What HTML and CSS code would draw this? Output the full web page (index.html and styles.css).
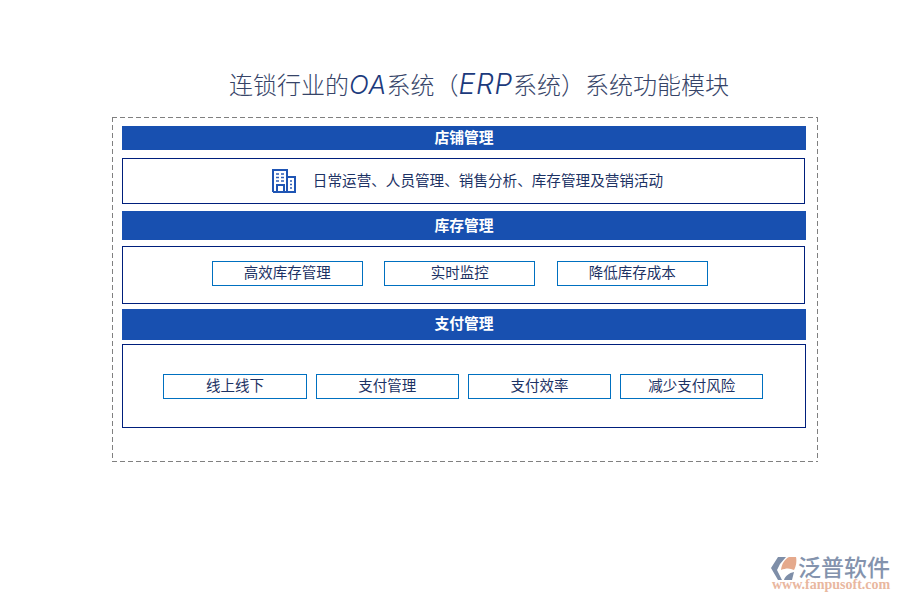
FILE: index.html
```html
<!DOCTYPE html>
<html lang="zh">
<head>
<meta charset="utf-8">
<title>连锁行业的OA系统（ERP系统）系统功能模块</title>
<link rel="stylesheet" href="styles.css">
</head>
<body>
<h1 class="title">连锁行业的<i class="latin">OA</i>系统（<i class="latin latin-wide">ERP</i>系统）系统功能模块</h1>
<main class="frame">
  <h2 class="bar bar-a"><span class="lift">店铺管理</span></h2>
  <section class="panel panel-a">
    <svg class="icon" viewBox="0 0 24 24" width="24" height="24" aria-hidden="true">
      <path class="icon-line" d="M1 23V1h14v22M15 8h8v15H1M5 23v-7h7v7"/>
      <path class="icon-dash" d="M4 5h3M9 5h3M4 8.500h3M9 8.500h3M4 12h3M9 12h3M18 12h2M18 15.500h2M18 19h2"/>
    </svg>
    <span class="lift">日常运营、人员管理、销售分析、库存管理及营销活动</span>
  </section>
  <h2 class="bar bar-b"><span class="lift">库存管理</span></h2>
  <section class="panel panel-b">
    <div class="tag tag-b"><span class="lift">高效库存管理</span></div>
    <div class="tag tag-b"><span class="lift">实时监控</span></div>
    <div class="tag tag-b"><span class="lift">降低库存成本</span></div>
  </section>
  <h2 class="bar bar-c"><span class="lift lift-more">支付管理</span></h2>
  <section class="panel panel-c">
    <div class="tag tag-c"><span class="lift">线上线下</span></div>
    <div class="tag tag-c"><span class="lift">支付管理</span></div>
    <div class="tag tag-c"><span class="lift">支付效率</span></div>
    <div class="tag tag-c"><span class="lift">减少支付风险</span></div>
  </section>
</main>
<footer class="brand">
  <div class="brand-row">
    <svg class="logo" viewBox="0 0 28 26" width="28" height="26" aria-hidden="true">
      <path class="logo-grey" d="M8 2h8L10 9 7 15l5 10H8L1 13z"/>
      <path class="logo-orange" d="M11 15C12 8 15 4 19 2h7c1 4 0 10-2 13-4-2-8-2-13 0z"/>
      <path class="logo-grey" d="M14 25c1-4 5-7 10-8l-2 8z"/>
    </svg>
    <div class="brand-name">泛普软件</div>
  </div>
  <div class="brand-url">www.fanpusoft.com</div>
</footer>
</body>
</html>
```
FILE: styles.css
```css
* { box-sizing: border-box; }
html, body { margin: 0; padding: 0; }
body {
  width: 900px;
  height: 600px;
  position: relative;
  overflow: hidden;
  background: #fff;
  color: #1c3264;
  font-family: "Noto Sans CJK SC", "Noto Sans", sans-serif;
}
.title {
  margin: 0;
  padding: 67px 0 0 229px;
  height: 117px;
  font-size: 24px;
  line-height: 34px;
  font-weight: 300;
  color: #364468;
  white-space: nowrap;
}
.latin {
  font-family: "Inter", sans-serif;
  font-style: italic;
  font-weight: 300;
  color: #1c3a7c;
  font-size: 26px;
  letter-spacing: 0.500px;
}
.latin-wide { font-size: 28px; letter-spacing: 0.800px; }
.frame {
  margin-left: 112px;
  width: 706px;
  height: 345px;
  padding: 9px 11px 0 10px;
  background-image:
    repeating-linear-gradient(90deg, #808080 0 5px, transparent 5px 8px),
    repeating-linear-gradient(90deg, #808080 0 5px, transparent 5px 8px),
    repeating-linear-gradient(180deg, #808080 0 5px, transparent 5px 8px),
    repeating-linear-gradient(180deg, #808080 0 5px, transparent 5px 8px);
  background-size: 100% 1px, 100% 1px, 1px 100%, 1px 100%;
  background-position: 0 0, 0 100%, 0 0, 100% 0;
  background-repeat: no-repeat;
}
.bar {
  margin: 0;
  width: 684px;
  background: #1850b0;
  color: #fff;
  font-size: 14.800px;
  font-weight: 700;
  display: flex;
  align-items: center;
  justify-content: center;
}
.lift { position: relative; top: -1.500px; }
.lift-more { top: -2.500px; }
.bar-a { height: 24px; }
.bar-b { height: 29px; margin-top: 7px; }
.bar-c { height: 31px; margin-top: 5px; }
.panel {
  border: 1px solid #001f7c;
  display: flex;
  align-items: center;
  justify-content: center;
  font-size: 14.600px;
  font-weight: 400;
  width: 683px;
}
.panel-a { height: 46px; margin-top: 8px; gap: 17px; padding-left: 8px; }
.panel-b { height: 58px; margin-top: 6px; gap: 21.500px; padding: 0 7.400px 4px 0; }
.panel-c { height: 84px; margin-top: 4px; gap: 9px; width: 684px; padding: 1px 1.200px 0 0; }
.icon { flex: none; }
.icon-line { fill: none; stroke: #1f55b4; stroke-width: 2; }
.icon-dash { fill: none; stroke: #2f5fb8; stroke-width: 1.500; }
.tag {
  border: 1px solid #0070c0;
  height: 25px;
  display: flex;
  align-items: center;
  justify-content: center;
  font-size: 14.500px;
  line-height: 20px;
}
.tag-b { width: 151px; }
.tag-c { width: 143.250px; }
.brand {
  position: absolute;
  left: 770px;
  top: 555px;
  width: 122px;
}
.brand-row { display: flex; height: 23px; align-items: flex-start; }
.logo { flex: none; }
.logo-grey { fill: #7e8ea8; }
.logo-orange { fill: #e5a98c; }
.brand-name {
  font-size: 23px;
  line-height: 23px;
  color: #8493ad;
  font-weight: 500;
  white-space: nowrap;
}
.brand-url {
  margin-left: 2px;
  font-family: "Liberation Serif", serif;
  font-size: 14px;
  line-height: 13px;
  color: #e9b79f;
  font-weight: 700;
  white-space: nowrap;
}
```
